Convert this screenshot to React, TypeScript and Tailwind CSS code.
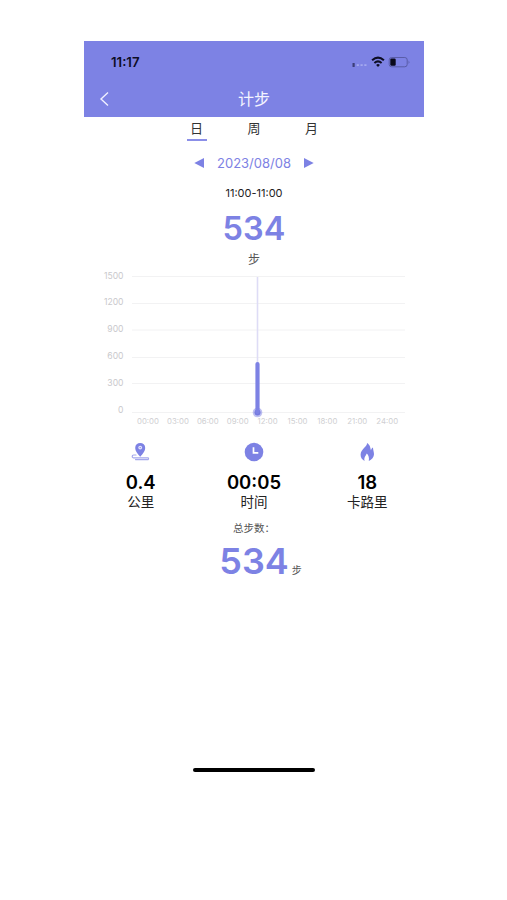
import { ReactNode } from "react"

const FONT = "font-['Inter','Noto_Sans_CJK_SC',sans-serif]"

const tabs = ["日", "周", "月"]
const yTicks = [1500, 1200, 900, 600, 300, 0]
const gridY = [11.5, 38.5, 65, 92.5, 118.5, 147.5]
const hours = ["00:00", "03:00", "06:00", "09:00", "12:00", "15:00", "18:00", "21:00", "24:00"]

function StatusBar() {
    return (
        <div className="flex h-[42px] items-center justify-between pl-[27px] pr-[13px]">
            <span className="pt-px text-[13.2px] font-semibold leading-none text-[#0d0d24]">11:17</span>
            <svg width="60" height="14" viewBox="0 0 60 14" fill="none">
                {/* 信号 */}
                <rect x="1.5" y="8" width="2.2" height="4" rx="0.6" fill="#3c3e78" />
                <rect x="5.7" y="9.3" width="2.2" height="1.6" fill="#a9adf0" />
                <rect x="9.5" y="9.3" width="2.2" height="1.6" fill="#a9adf0" />
                <rect x="13.3" y="9.3" width="2.2" height="1.6" fill="#a9adf0" />
                {/* Wi-Fi */}
                <path d="M21.1 5.2Q27 0.1 32.9 5.2" stroke="#0d0d24" strokeWidth="2.1" />
                <path d="M23.4 7.9Q27 4.9 30.6 7.9" stroke="#0d0d24" strokeWidth="2" />
                <path d="M25.1 9.9Q27 8.2 28.9 9.9L27 12Z" fill="#0d0d24" />
                {/* 电池 */}
                <rect x="38.2" y="2.5" width="18" height="9.3" rx="2.4" stroke="#5558a0" strokeWidth="0.9" />
                <rect x="39.3" y="3.6" width="5.4" height="7.1" rx="1.2" fill="#0a0a1c" />
                <path d="M57.6 5.4Q59.4 7.1 57.6 8.9Z" fill="#5558a0" />
            </svg>
        </div>
    )
}

function StepChart() {
    return (
        <svg width="340" height="164" viewBox="0 0 340 164" className="block">
            {gridY.map((y) => (
                <line key={y} x1="48" x2="321" y1={y} y2={y} stroke="#f2f2f3" strokeWidth="1" />
            ))}
            {yTicks.map((tick, i) => (
                <text key={tick} x="39.5" y={13.5 + i * 26.9} textAnchor="end" fontSize="8.6" fill="#c9c9cc">
                    {tick}
                </text>
            ))}
            {hours.map((hour, i) => (
                <text key={hour} x={64 + i * 29.9} y="158.7" textAnchor="middle" fontSize="7.8" fill="#cfcfd2">
                    {hour}
                </text>
            ))}
            <line x1="173.5" x2="173.5" y1="12" y2="98" stroke="#dedcf6" strokeWidth="1.6" />
            <circle cx="173.5" cy="147.5" r="4.8" fill="#7d82e4" opacity="0.5" />
            <circle cx="173.5" cy="147.5" r="3" fill="#7479df" />
            <line x1="173.5" x2="173.5" y1="99" y2="147" stroke="#7d82e4" strokeWidth="4.2" strokeLinecap="round" />
        </svg>
    )
}

function RouteIcon() {
    return (
        <svg width="20" height="20" viewBox="0 0 20 20" fill="none">
            <path d="M5 13H2.6A1.4 1.4 0 0 0 2.6 15.8H17A1 1 0 0 1 17 17.6H4.5" stroke="#a4a7ec" strokeWidth="1.2" strokeLinecap="round" />
            <path d="M9.2 14.8C6.4 11.4 4.2 8.8 4.2 5.9a5 5 0 0 1 10 0C14.2 8.8 12 11.4 9.2 14.8Z" fill="#7d82e4" />
            <circle cx="9.2" cy="5.6" r="1.9" fill="#e4e5fb" />
            <circle cx="9.2" cy="5.6" r="0.7" fill="#7d82e4" />
        </svg>
    )
}

function ClockIcon() {
    return (
        <svg width="20" height="20" viewBox="0 0 20 20" fill="none">
            <circle cx="10" cy="10" r="9.3" fill="#7d82e4" />
            <path d="M9.5 5.3V10.8H14.3" stroke="white" strokeWidth="1.7" />
        </svg>
    )
}

function FlameIcon() {
    return (
        <svg width="20" height="20" viewBox="0 0 20 20">
            <path
                d="M10 1C10.6 4.3 3.6 7.4 3.6 12.7C3.6 15.5 5 17.7 7.6 18.9C6.6 15.7 8.8 14 9.8 11.6C11.4 13.2 12.4 15.7 11.8 18.9C14.8 17.6 17 15.3 17 12.3C17 9.8 15.9 7.8 16 5.6C14.8 6.2 14.2 7.1 14 8.4C13.2 6 13.4 3 10 1Z"
                fill="#7d82e4"
            />
        </svg>
    )
}

function Stat({ icon, value, label }: { icon: ReactNode; value: string; label: string }) {
    return (
        <div className="flex flex-1 flex-col items-center">
            {icon}
            <span className="mt-[9px] text-[18.5px] font-semibold leading-[22px] text-black">{value}</span>
            <span className="text-[13.5px] leading-[19px] text-[#222]">{label}</span>
        </div>
    )
}

export default function App() {
    return (
        <div className={`h-[900px] w-[507px] bg-white pl-[84px] pt-[41px] ${FONT}`}>
            <div className="flex w-[340px] flex-col">
                <header className="h-[76px] bg-[#7d82e4]">
                    <StatusBar />
                    <div className="grid h-[31px] grid-cols-3 items-center">
                        <svg width="12" height="16" viewBox="0 0 12 16" fill="none" className="ml-[15px]">
                            <path d="M9 1.5L2 8L9 14.5" stroke="#f0f0ff" strokeWidth="1.4" />
                        </svg>
                        <h1 className="text-center text-[16px] leading-none text-[#f4f4ff]">计步</h1>
                    </div>
                </header>

                {/* 日 / 周 / 月 */}
                <nav className="flex h-6 justify-center gap-[37.5px] pt-[2px]">
                    {tabs.map((tab, i) => (
                        <button
                            key={tab}
                            className={`h-[22px] w-5 border-b-2 pb-px text-[13px] leading-[19px] text-[#333] ${i === 0 ? "border-[#8b8fe8]" : "border-transparent"}`}
                        >
                            {tab}
                        </button>
                    ))}
                </nav>

                {/* 日期 */}
                <div className="mt-[12px] flex h-5 items-center justify-center gap-[13px] text-[#7d82e4]">
                    <svg width="10" height="10" viewBox="0 0 10 10">
                        <path d="M10 0V10L0.3 5Z" fill="currentColor" />
                    </svg>
                    <span className="pt-px text-[13px] leading-none">2023/08/08</span>
                    <svg width="10" height="10" viewBox="0 0 10 10">
                        <path d="M0 0V10L9.7 5Z" fill="currentColor" />
                    </svg>
                </div>

                <div className="mt-[12px] text-center text-[11px] leading-4 text-[#222]">11:00-11:00</div>
                <div className="mt-[9px] text-center text-[32.5px] font-semibold leading-[38px] text-[#7d82e4]">534</div>
                <div className="mt-[4px] h-[16px] text-center text-[12px] leading-[16px] text-[#555]">步</div>

                <div className="-mt-[3px]">
                    <StepChart />
                </div>

                <div className="mt-[13px] flex">
                    <Stat icon={<RouteIcon />} value="0.4" label="公里" />
                    <Stat icon={<ClockIcon />} value="00:05" label="时间" />
                    <Stat icon={<FlameIcon />} value="18" label="卡路里" />
                </div>

                <div className="mt-[9px] text-center text-[10.5px] leading-4 text-[#555]">总步数：</div>
                <div className="mt-[4px] flex h-[40px] items-baseline justify-center gap-[3px] pl-[13px] leading-[40px]">
                    <span className="text-[36px] font-semibold text-[#7d82e4]">534</span>
                    <span className="text-[10px] text-[#555]">步</span>
                </div>

                <div className="mx-auto mt-[187px] h-1 w-[122px] rounded-full bg-black" />
            </div>
        </div>
    )
}
